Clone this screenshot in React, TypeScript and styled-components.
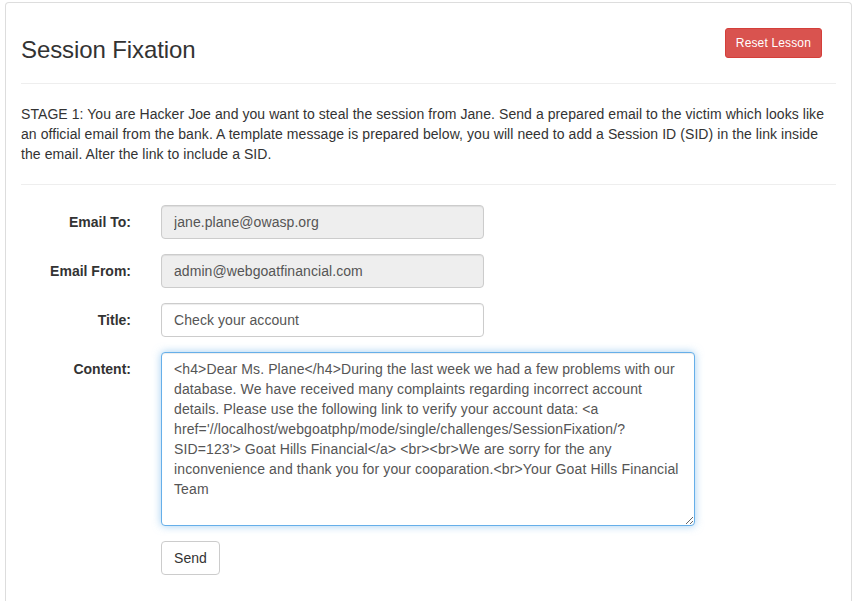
import React, { useEffect, useRef } from 'react';
import styled, { createGlobalStyle } from 'styled-components';

const GlobalStyle = createGlobalStyle`
  * { box-sizing: border-box; }
  html, body { margin: 0; padding: 0; background: #fff; }
  body {
    font-family: "Liberation Sans", Arial, sans-serif;
    font-size: 14px;
    line-height: 20px;
    letter-spacing: 0.07px;
    color: #333;
  }
`;

const CONTENT =
  "<h4>Dear Ms. Plane</h4>During the last week we had a few problems with our database. We have received many complaints regarding incorrect account details. Please use the following link to verify your account data: <a href='//localhost/webgoatphp/mode/single/challenges/SessionFixation/?SID=123'> Goat Hills Financial</a> <br><br>We are sorry for the any inconvenience and thank you for your cooparation.<br>Your Goat Hills Financial Team";

const App: () => React.ReactElement = () => {
  const areaRef = useRef<HTMLTextAreaElement>(null);

  useEffect(() => {
    const el = areaRef.current;
    if (!el) return;
    const pos = CONTENT.indexOf('SID=123') + 7;
    el.focus();
    el.setSelectionRange(pos, pos);
  }, []);

  return (
    <>
      <GlobalStyle />
      <Panel>
        <Header>
          <Title>Session Fixation</Title>
          <ResetButton type="button">Reset Lesson</ResetButton>
        </Header>
        <Rule />
        <Intro>
          STAGE 1: You are Hacker Joe and you want to steal the session from Jane. Send a prepared
          email to the victim which looks like an official email from the bank. A template message
          is prepared below, you will need to add a Session ID (SID) in the link inside the email.
          Alter the link to include a SID.
        </Intro>
        <Rule />
        <Form onSubmit={(e) => e.preventDefault()}>
          <Row>
            <Label>Email To:</Label>
            <Input $width={323} readOnly $muted defaultValue="jane.plane@owasp.org" />
          </Row>
          <Row>
            <Label>Email From:</Label>
            <Input $width={323} readOnly $muted defaultValue="admin@webgoatfinancial.com" />
          </Row>
          <Row>
            <Label>Title:</Label>
            <Input $width={323} defaultValue="Check your account" />
          </Row>
          <Row>
            <Label>Content:</Label>
            <TextArea ref={areaRef} rows={8} defaultValue={CONTENT} />
          </Row>
          <Row>
            <span />
            <SendButton type="submit">Send</SendButton>
          </Row>
        </Form>
      </Panel>
    </>
  );
};

export default App;

const Panel = styled.div`
  margin: 2px 4px 0 5px;
  padding: 15px;
  min-height: 620px;
  border: 1px solid #ddd;
  border-bottom: none;
  border-radius: 4px 4px 0 0;
  background: #fff;
`;

const Header = styled.div`
  display: flex;
  justify-content: space-between;
  align-items: flex-start;
`;

const Title = styled.h2`
  margin: 19px 0 0 0;
  font-size: 24px;
  font-weight: 500;
  line-height: 26px;
  letter-spacing: -0.1px;
  color: #333;
`;

const ResetButton = styled.button`
  margin: 10px 14px 0 0;
  padding: 5px 10px;
  font-family: inherit;
  font-size: 12px;
  line-height: 18px;
  letter-spacing: 0.15px;
  color: #fff;
  background: #d9534f;
  border: 1px solid #d43f3a;
  border-radius: 3px;
  cursor: pointer;
`;

const Rule = styled.hr`
  margin: 20px 0;
  border: 0;
  border-top: 1px solid #eee;
`;

const Intro = styled.p`
  margin: 0 0 10px;
`;

const Form = styled.form`
  display: flex;
  flex-direction: column;
  gap: 15px;
`;

const Row = styled.div`
  display: grid;
  grid-template-columns: 110px auto;
  column-gap: 30px;
  justify-content: start;
  align-items: start;
`;

const Label = styled.label`
  padding-top: 7px;
  text-align: right;
  font-weight: 700;
  letter-spacing: 0;
  color: #333;
`;

const Input = styled.input<{ $width: number; $muted?: boolean }>`
  width: ${({ $width }) => $width}px;
  height: 34px;
  padding: 6px 12px;
  font-family: inherit;
  font-size: 14px;
  line-height: 20px;
  letter-spacing: 0.07px;
  color: #555;
  background: ${({ $muted }) => ($muted ? '#eee' : '#fff')};
  border: 1px solid #ccc;
  border-radius: 4px;
  box-shadow: inset 0 1px 1px rgba(0, 0, 0, 0.075);
  outline: none;
`;

const TextArea = styled.textarea`
  display: block;
  width: 534px;
  height: 174px;
  padding: 6px 12px;
  font-family: inherit;
  font-size: 14px;
  line-height: 20px;
  letter-spacing: 0.12px;
  color: #555;
  background: #fff;
  border: 1px solid #66afe9;
  border-radius: 4px;
  box-shadow: inset 0 1px 1px rgba(0, 0, 0, 0.075), 0 0 8px rgba(102, 175, 233, 0.6);
  outline: none;
  resize: both;
  caret-color: #333;
`;

const SendButton = styled.button`
  height: 34px;
  padding: 6px 12px;
  font-family: inherit;
  font-size: 14px;
  line-height: 20px;
  letter-spacing: 0.07px;
  color: #333;
  background: #fff;
  border: 1px solid #ccc;
  border-radius: 4px;
  cursor: pointer;
`;
